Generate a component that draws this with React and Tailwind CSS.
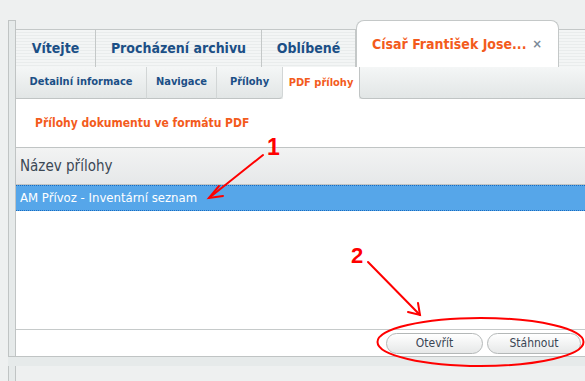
import React from 'react'

const font = 'font-["DejaVu_Sans_Condensed","DejaVu_Sans",sans-serif]'
const stripes = 'bg-[repeating-linear-gradient(180deg,#f3f5f5_0px,#f3f5f5_2px,#e9ecec_2px,#e9ecec_3px)]'
const subBg = 'bg-[linear-gradient(180deg,#f4f6f6,#e2e6e6)]'

const MainTab = ({ label, w }) => (
  <div className={`${w} h-[38px] ${stripes} border-t border-r border-[#c4c8c8] flex items-center justify-center text-[14px] font-bold text-[#1b4f86]`}>
    {label}
  </div>
)

const SubTab = ({ label, w, last }) => (
  <div className={`${w} h-full ${subBg} border-r border-[#d2d6d6] flex items-center justify-center text-[11px] font-bold text-[#1b4f86] border-b border-b-[#c0c4c4] ${last ? 'rounded-br-[4px]' : ''}`}>
    {label}
  </div>
)

const Button = ({ label, w }) => (
  <button className={`${w} h-[21px] rounded-full border border-[#b4b8b8] bg-[linear-gradient(180deg,#ffffff,#e6e8e8)] text-[12px] text-[#3a4654]`}>
    {label}
  </button>
)

const Annotations = () => (
  <svg className="absolute inset-0 pointer-events-none" width="585" height="381">
    <g stroke="#ff0000" strokeWidth="2" fill="none" strokeLinecap="round">
      <line x1="263" y1="155" x2="209" y2="198" />
      <polyline points="219,186 209,198 223,196" />
      <line x1="368" y1="262" x2="420" y2="315" />
      <polyline points="408,312 420,315 418,303" />
      <ellipse cx="480.5" cy="342" rx="103" ry="24" />
    </g>
    <text x="267" y="155" fontFamily="Liberation Sans, Arial, sans-serif" fontWeight="bold" fontSize="23" fill="#ff0000">1</text>
    <text x="351" y="263" fontFamily="Liberation Sans, Arial, sans-serif" fontWeight="bold" fontSize="22" fill="#ff0000">2</text>
  </svg>
)

export default function App() {
  return (
    <div className={`relative w-[585px] h-[381px] overflow-hidden bg-[#eef0f0] ${font}`}>
      <div className="flex flex-col h-full pt-[20px]">
        <div className="flex h-[336px]">
          <div className="w-[8px] ml-[8px] bg-[#e6eaea] border-x border-t border-[#c0c4c4]" />
          <div className="flex-1 flex flex-col min-w-0">
            <div className="h-[47px] flex items-end">
              <MainTab label="Vítejte" w="w-[80px]" />
              <MainTab label="Procházení archivu" w="w-[166px]" />
              <MainTab label="Oblíbené" w="w-[94px]" />
              <div className="w-[203px] h-[47px] shrink-0 bg-white rounded-t-[8px] border border-b-0 border-[#c4c8c8] flex items-center pl-[15px] pr-[16px] text-[14px] font-bold text-[#f35b1c] whitespace-nowrap">
                <span className="flex-1">Císař František Jose...</span>
                <span className="text-[#7b8a98] text-[13px]">×</span>
              </div>
              <div className={`flex-1 h-[38px] ${stripes} border-t border-[#c4c8c8]`} />
            </div>
            <div className="h-[32px] flex">
              <SubTab label="Detailní informace" w="w-[131px]" />
              <SubTab label="Navigace" w="w-[70px]" />
              <SubTab label="Přílohy" w="w-[66px]" last />
              <div className="w-[76px] h-full bg-white flex items-center justify-center text-[11px] font-bold text-[#f35b1c]">PDF přílohy</div>
              <div className={`flex-1 h-full ${subBg} rounded-bl-[4px] border-l border-b border-[#c0c4c4]`} />
            </div>
            <div className="flex-1 bg-white flex flex-col">
              <div className="h-[48px] flex items-center pl-[19px] text-[12px] font-bold text-[#f35b1c]">
                Přílohy dokumentu ve formátu PDF
              </div>
              <div className="h-[38px] border-y border-[#c0c4c4] bg-[linear-gradient(180deg,#f2f3f3,#e6e8e9)] flex items-center pl-[4px] text-[15px] text-[#3b4754]">
                Název přílohy
              </div>
              <div className="h-[26px] bg-[#56a6e9] border-y border-dotted border-[#1a6cc0] flex items-center pl-[4px] text-[13px] text-white">
                AM Přívoz - Inventární seznam
              </div>
              <div className="flex-1" />
              <div className="h-[27px] border-t border-[#c6caca] flex items-center justify-end gap-[4px] pr-[4px]">
                <Button label="Otevřít" w="w-[97px]" />
                <Button label="Stáhnout" w="w-[94px]" />
              </div>
            </div>
          </div>
        </div>
        <div className="h-[10px] ml-[8px] bg-[#e6eaea] border-t border-[#c0c4c4]" />
        <div className="flex-1 flex">
          <div className="w-[8px] ml-[8px] bg-[#e6eaea] border-x border-[#c0c4c4]" />
        </div>
      </div>
      <Annotations />
    </div>
  )
}
